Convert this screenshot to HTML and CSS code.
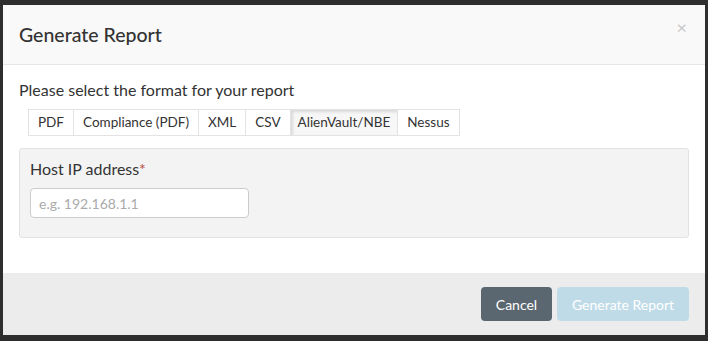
FILE: index.html
```html
<!DOCTYPE html>
<html>
<head>
<meta charset="utf-8">
<link rel="stylesheet" href="styles.css">
</head>
<body>
<div class="backdrop">
  <div class="modal">
    <div class="modal-header">
      <h4 class="modal-title">Generate Report</h4>
      <span class="close">×</span>
    </div>
    <div class="modal-body">
      <p class="intro">Please select the format for your report</p>
      <div class="tabs">
        <span class="tab">PDF</span>
        <span class="tab">Compliance (PDF)</span>
        <span class="tab">XML</span>
        <span class="tab">CSV</span>
        <span class="tab active">AlienVault/NBE</span>
        <span class="tab">Nessus</span>
      </div>
      <div class="panel">
        <label class="label">Host IP address<span class="req">*</span></label>
        <input class="input" type="text" placeholder="e.g. 192.168.1.1">
      </div>
    </div>
    <div class="modal-footer">
      <button class="btn btn-cancel">Cancel</button>
      <button class="btn btn-primary">Generate Report</button>
    </div>
  </div>
</div>
</body>
</html>
```
FILE: styles.css
```css
* { box-sizing: border-box; }
html, body { margin: 0; padding: 0; }
body {
  width: 708px;
  height: 341px;
  background: #2e2e2e;
  font-family: Lato, "Open Sans", sans-serif;
  color: #333;
  overflow: hidden;
}
.backdrop {
  padding: 5px 3px 0 3px;
}
.modal {
  width: 702px;
  height: 330px;
  background: #fff;
  display: flex;
  flex-direction: column;
}
.modal-header {
  height: 60px;
  flex: none;
  background: #f9f9f9;
  border-bottom: 1px solid #e6e6e6;
  display: flex;
  align-items: center;
  justify-content: space-between;
  padding: 0 16px 0 16px;
}
.modal-title {
  margin: 0;
  font-size: 19.5px;
  font-weight: 500;
  color: #333;
}
.close {
  font-size: 18px;
  color: #c8c8c8;
  align-self: flex-start;
  margin-top: 13px;
  margin-right: 2px;
  line-height: 1;
}
.modal-body {
  height: 208px;
  flex: none;
  padding: 14px 16px 0 16px;
}
.intro {
  margin: 0;
  font-size: 16px;
  line-height: 22px;
}
.tabs {
  display: flex;
  margin: 8px 0 0 9px;
}
.tab {
  height: 27px;
  line-height: 25px;
  padding: 0 9px;
  font-size: 13.5px;
  border: 1px solid #e3e3e3;
  border-left: none;
  background: #fff;
  color: #333;
}
.tab:first-child { border-left: 1px solid #e3e3e3; }
.tab.active {
  padding: 0 7px;
  background: #f7f7f7;
  box-shadow: inset 2px 2px 3px rgba(0,0,0,0.12);
}
.panel {
  margin-top: 12px;
  height: 90px;
  width: 670px;
  background: #f3f3f3;
  border: 1px solid #e2e2e2;
  border-radius: 3px;
  padding: 10px 10px;
  display: flex;
  flex-direction: column;
}
.label {
  font-size: 16px;
  line-height: 20px;
  color: #333;
}
.req { color: #b94a48; }
.input {
  margin-top: 9px;
  width: 219px;
  height: 30px;
  border: 1px solid #ccc;
  border-radius: 4px;
  background: #fff;
  font-family: Lato, sans-serif;
  font-size: 14px;
  padding: 0 8px;
  color: #333;
}
.input::placeholder { color: #aaa; }
.modal-footer {
  height: 62px;
  flex: none;
  background: #ececec;
  display: flex;
  justify-content: flex-end;
  align-items: flex-start;
  gap: 5px;
  padding: 14px 16px 0 0;
}
.btn {
  height: 34px;
  border: none;
  border-radius: 4px;
  font-family: Lato, sans-serif;
  font-size: 14px;
  color: #fff;
  padding: 0 14px;
}
.btn-cancel { background: #5b6770; width: 71px; }
.btn-primary { background: #c0dbe8; width: 132px; }
```
